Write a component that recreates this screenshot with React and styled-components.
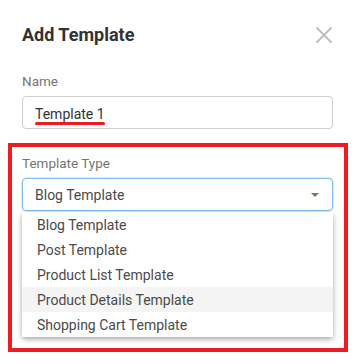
import React from "react";
import styled, { createGlobalStyle } from "styled-components";

const GlobalStyle = createGlobalStyle`
	body {
		margin: 0;
		background: #ffffff;
		font-family: Roboto, "Liberation Sans", Arial, sans-serif;
	}
`;

const options = [
	"Blog Template",
	"Post Template",
	"Product List Template",
	"Product Details Template",
	"Shopping Cart Template",
];

const App = () => {
	return (
		<Container>
			<GlobalStyle />
			<Header>
				<Title>Add Template</Title>
				<Close aria-label="close">
					<svg width="16" height="16" viewBox="0 0 16 16">
						<path
							d="M1 1 L15 15 M15 1 L1 15"
							stroke="#bdbdbd"
							strokeWidth="1.8"
							strokeLinecap="round"
						/>
					</svg>
				</Close>
			</Header>

			<Field>
				<Label>Name</Label>
				<Input>
					<Marked>Template 1</Marked>
				</Input>
			</Field>

			<Outlined>
				<Label>Template Type</Label>
				<Select>
					<span>Blog Template</span>
					<Caret />
				</Select>
				<Menu>
					{options.map((o) => (
						<Item key={o} $active={o === "Product Details Template"}>
							{o}
						</Item>
					))}
				</Menu>
			</Outlined>
		</Container>
	);
};

export default App;

const Container = styled.div`
	width: 354px;
	height: 364px;
	overflow: hidden;
`;

const Header = styled.div`
	display: flex;
	justify-content: space-between;
	align-items: center;
	padding: 21px 22px 0 22px;
	height: 26px;
`;

const Title = styled.h2`
	margin: 0;
	font-size: 18px;
	font-weight: 700;
	color: #333333;
`;

const Close = styled.div`
	width: 16px;
	height: 16px;
	display: flex;
	margin-top: 1px;
`;

const Field = styled.div`
	display: flex;
	flex-direction: column;
	padding: 26px 21px 0 22px;
`;

const Label = styled.label`
	font-size: 13.5px;
	line-height: 16px;
	color: #757575;
	margin-bottom: 7px;
`;

const Input = styled.div`
	height: 33px;
	box-sizing: border-box;
	border: 1px solid #d0d0d0;
	border-radius: 4px;
	padding: 0 12px;
	display: flex;
	align-items: center;
	font-size: 14px;
	color: #333333;
`;

const Marked = styled.span`
	position: relative;
	top: 1px;
	&::after {
		content: "";
		position: absolute;
		left: 0;
		right: 0;
		bottom: -3px;
		height: 3px;
		border-radius: 2px;
		background: #ed1c24;
	}
`;

const Outlined = styled.div`
	margin: 14px 6px 0 8px;
	border: 4px solid #ed1c24;
	padding: 8px 11px 11px 10px;
	display: flex;
	flex-direction: column;
`;

const Select = styled.div`
	height: 33px;
	box-sizing: border-box;
	border: 1px solid #7fbcf3;
	box-shadow: 0 0 0 0.5px #b9dcfb;
	border-radius: 4px;
	padding: 0 12px 0 12px;
	display: flex;
	align-items: center;
	justify-content: space-between;
	font-size: 14px;
	color: #4a4a4a;
`;

const Caret = styled.span`
	width: 0;
	height: 0;
	border-left: 4px solid transparent;
	border-right: 4px solid transparent;
	border-top: 4px solid #757575;
	margin-right: 1px;
`;

const Menu = styled.ul`
	list-style: none;
	margin: 1px 0 0 0;
	padding: 0;
	border-radius: 3px;
	background: #ffffff;
	box-shadow: 0 2px 4px rgba(0, 0, 0, 0.25), 0 3px 8px rgba(0, 0, 0, 0.12);
`;

const Item = styled.li`
	height: 25px;
	display: flex;
	align-items: center;
	padding-left: 15px;
	font-size: 14px;
	color: #4a4a4a;
	background: ${(p) => (p.$active ? "#f4f4f4" : "#ffffff")};
`;
